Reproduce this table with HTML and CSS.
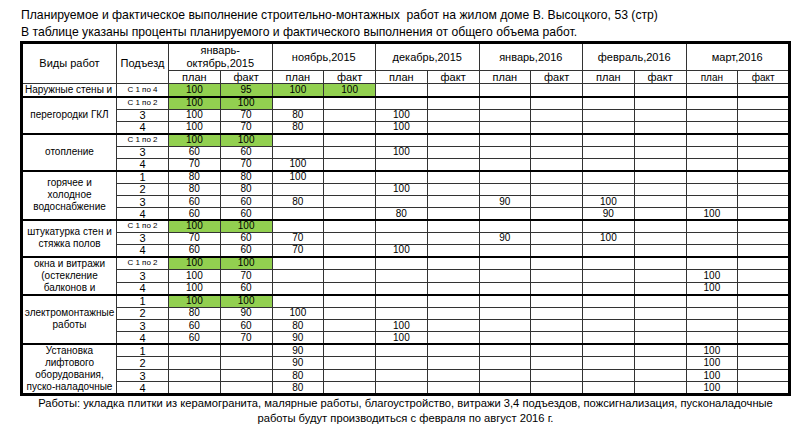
FILE: index.html
```html
<!DOCTYPE html>
<html lang="ru">
<head>
<meta charset="utf-8">
<title>Выполнение работ</title>
<link rel="stylesheet" href="styles.css">
</head>
<body>
<div class="page">
  <p class="title">Планируемое и фактическое выполнение строительно-монтажных&nbsp; работ на жилом доме В. Высоцкого, 53 (стр)</p>
  <p class="title">В таблице указаны проценты планируемого и фактического выполнения от общего объема работ.</p>
  <table class="grid">
    <colgroup><col class="c-name"><col class="c-ent"><col span="12"></colgroup>
    <thead>
      <tr class="h1">
        <th rowspan="2" class="name-h">Виды работ</th>
        <th rowspan="2" class="ent-h">Подъезд</th>
        <th colspan="2">январь-<br>октябрь,2015</th>
        <th colspan="2">ноябрь,2015</th>
        <th colspan="2">декабрь,2015</th>
        <th colspan="2">январь,2016</th>
        <th colspan="2">февраль,2016</th>
        <th colspan="2">март,2016</th>
      </tr>
      <tr class="h2">
        <th>план</th><th>факт</th><th>план</th><th>факт</th><th>план</th><th>факт</th>
        <th>план</th><th>факт</th><th>план</th><th>факт</th><th class="sm">план</th><th class="sm">факт</th>
      </tr>
    </thead>
    <tbody>
      <tr>
        <td class="lab left">Наружные стены и</td><td class="ent s">С 1 по 4</td>
        <td class="gr">100</td><td class="gr">95</td><td class="gr">100</td><td class="gr">100</td><td></td><td></td><td></td><td></td><td></td><td></td><td></td><td></td>
      </tr>

      <tr class="g">
        <td class="lab" rowspan="3">перегородки ГКЛ</td><td class="ent s">С 1 по 2</td>
        <td class="gr">100</td><td class="gr">100</td><td></td><td></td><td></td><td></td><td></td><td></td><td></td><td></td><td></td><td></td>
      </tr>
      <tr>
        <td class="ent">3</td>
        <td>100</td><td>70</td><td>80</td><td></td><td>100</td><td></td><td></td><td></td><td></td><td></td><td></td><td></td>
      </tr>
      <tr>
        <td class="ent">4</td>
        <td>100</td><td>70</td><td>80</td><td></td><td>100</td><td></td><td></td><td></td><td></td><td></td><td></td><td></td>
      </tr>

      <tr class="g">
        <td class="lab" rowspan="3">отопление</td><td class="ent s">С 1 по 2</td>
        <td class="gr">100</td><td class="gr">100</td><td></td><td></td><td></td><td></td><td></td><td></td><td></td><td></td><td></td><td></td>
      </tr>
      <tr>
        <td class="ent">3</td>
        <td>60</td><td>60</td><td></td><td></td><td>100</td><td></td><td></td><td></td><td></td><td></td><td></td><td></td>
      </tr>
      <tr>
        <td class="ent">4</td>
        <td>70</td><td>70</td><td>100</td><td></td><td></td><td></td><td></td><td></td><td></td><td></td><td></td><td></td>
      </tr>

      <tr class="g">
        <td class="lab" rowspan="4">горячее и<br>холодное<br>водоснабжение</td><td class="ent">1</td>
        <td>80</td><td>80</td><td>100</td><td></td><td></td><td></td><td></td><td></td><td></td><td></td><td></td><td></td>
      </tr>
      <tr>
        <td class="ent">2</td>
        <td>80</td><td>80</td><td></td><td></td><td>100</td><td></td><td></td><td></td><td></td><td></td><td></td><td></td>
      </tr>
      <tr>
        <td class="ent">3</td>
        <td>60</td><td>60</td><td>80</td><td></td><td></td><td></td><td>90</td><td></td><td>100</td><td></td><td></td><td></td>
      </tr>
      <tr>
        <td class="ent">4</td>
        <td>60</td><td>60</td><td></td><td></td><td>80</td><td></td><td></td><td></td><td>90</td><td></td><td>100</td><td></td>
      </tr>

      <tr class="g">
        <td class="lab" rowspan="3">штукатурка стен и<br>стяжка полов</td><td class="ent s">С 1 по 2</td>
        <td class="gr">100</td><td class="gr">100</td><td></td><td></td><td></td><td></td><td></td><td></td><td></td><td></td><td></td><td></td>
      </tr>
      <tr>
        <td class="ent">3</td>
        <td>70</td><td>60</td><td>70</td><td></td><td></td><td></td><td>90</td><td></td><td>100</td><td></td><td></td><td></td>
      </tr>
      <tr>
        <td class="ent">4</td>
        <td>60</td><td>60</td><td>70</td><td></td><td>100</td><td></td><td></td><td></td><td></td><td></td><td></td><td></td>
      </tr>

      <tr class="g">
        <td class="lab" rowspan="3">окна и витражи<br>(остекление<br>балконов и</td><td class="ent s">С 1 по 2</td>
        <td class="gr">100</td><td class="gr">100</td><td></td><td></td><td></td><td></td><td></td><td></td><td></td><td></td><td></td><td></td>
      </tr>
      <tr>
        <td class="ent">3</td>
        <td>100</td><td>70</td><td></td><td></td><td></td><td></td><td></td><td></td><td></td><td></td><td>100</td><td></td>
      </tr>
      <tr>
        <td class="ent">4</td>
        <td>100</td><td>60</td><td></td><td></td><td></td><td></td><td></td><td></td><td></td><td></td><td>100</td><td></td>
      </tr>

      <tr class="g">
        <td class="lab" rowspan="4">электромонтажные<br>работы</td><td class="ent">1</td>
        <td class="gr">100</td><td class="gr">100</td><td></td><td></td><td></td><td></td><td></td><td></td><td></td><td></td><td></td><td></td>
      </tr>
      <tr>
        <td class="ent">2</td>
        <td>80</td><td>90</td><td>100</td><td></td><td></td><td></td><td></td><td></td><td></td><td></td><td></td><td></td>
      </tr>
      <tr>
        <td class="ent">3</td>
        <td>60</td><td>60</td><td>80</td><td></td><td>100</td><td></td><td></td><td></td><td></td><td></td><td></td><td></td>
      </tr>
      <tr>
        <td class="ent">4</td>
        <td>60</td><td>70</td><td>90</td><td></td><td>100</td><td></td><td></td><td></td><td></td><td></td><td></td><td></td>
      </tr>

      <tr class="g">
        <td class="lab" rowspan="4">Установка<br>лифтового<br>оборудования,<br>пуско-наладочные</td><td class="ent">1</td>
        <td></td><td></td><td>90</td><td></td><td></td><td></td><td></td><td></td><td></td><td></td><td>100</td><td></td>
      </tr>
      <tr>
        <td class="ent">2</td>
        <td></td><td></td><td>90</td><td></td><td></td><td></td><td></td><td></td><td></td><td></td><td>100</td><td></td>
      </tr>
      <tr>
        <td class="ent">3</td>
        <td></td><td></td><td>80</td><td></td><td></td><td></td><td></td><td></td><td></td><td></td><td>100</td><td></td>
      </tr>
      <tr>
        <td class="ent">4</td>
        <td></td><td></td><td>80</td><td></td><td></td><td></td><td></td><td></td><td></td><td></td><td>100</td><td></td>
      </tr>
    </tbody>
  </table>
  <p class="note">Работы: укладка плитки из керамогранита, малярные работы, благоустройство, витражи 3,4 подъездов, пожсигнализация, пусконаладочные<br>работы будут производиться с февраля по август 2016 г.</p>
</div>
</body>
</html>
```

FILE: styles.css
```css
* { box-sizing: border-box; }

body {
  margin: 0;
  background: #fff;
  color: #000;
  font-family: "Liberation Sans", Arial, sans-serif;
}

.page {
  width: 800px;
  height: 427px;
  overflow: hidden;
  padding-top: 7px;
}

.title {
  margin: 0 0 0 21px;
  font-size: 12.2px;
  line-height: 17px;
  white-space: nowrap;
}

.grid {
  margin-left: 20px;
  width: 771px;
  border-collapse: collapse;
  table-layout: fixed;
  border: 3px solid #000;
}

.c-name { width: 95px; }
.c-ent { width: 52px; }

.grid th,
.grid td {
  padding: 0;
  border: 1px solid #333;
  text-align: center;
  vertical-align: middle;
  font-weight: normal;
  white-space: nowrap;
  overflow: visible;
}

.h1 { height: 28px; }
.h1 th { font-size: 11px; line-height: 13px; }

.h2 { height: 13px; }
.h2 th { font-size: 11px; line-height: 11px; }
.h2 th.sm { font-size: 10px; }

.grid tbody tr { height: 12.3px; }
.grid tbody td { font-size: 10px; line-height: 10px; }

.grid tbody td.ent { font-size: 11px; }
.grid tbody td.ent.s { font-size: 8px; }

.grid tbody td.lab {
  font-size: 10px;
  line-height: 12px;
}
.grid tbody td.left {
  text-align: left;
  padding-left: 2px;
}

.grid tbody tr.g td { border-top: 2px solid #000; }

.grid td.gr { background: #92d050; }

.note {
  margin: 0 0 0 20px;
  width: 771px;
  text-align: center;
  font-size: 11.2px;
  line-height: 15px;
  white-space: nowrap;
}
```
